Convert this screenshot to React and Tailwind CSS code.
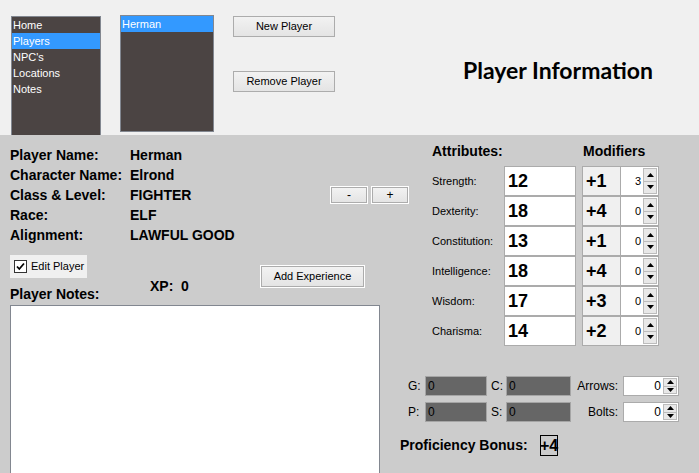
import React from "react";

const sans = { fontFamily: '"Liberation Sans", Arial, sans-serif' };

function Tri({ down }) {
  return (
    <svg width="7" height="4" viewBox="0 0 7 4">
      {down ? <path d="M0 0h7L3.5 4z" fill="#000" /> : <path d="M0 4h7L3.5 0z" fill="#000" />}
    </svg>
  );
}

function Spin({ value, className, numClass }) {
  return (
    <div className={`flex items-stretch bg-white border border-[#ababab] ${className}`}>
      <div className={`flex-1 flex items-center justify-end pr-[2px] text-black ${numClass}`}>{value}</div>
      <div className="w-[14px] mr-[1px] my-[1px] flex flex-col">
        <div className="flex-1 flex items-center justify-center bg-[#e8e8e8] border border-[#bcbcbc]"><Tri /></div>
        <div className="flex-1 flex items-center justify-center bg-[#e8e8e8] border border-[#bcbcbc] border-t-0"><Tri down /></div>
      </div>
    </div>
  );
}

const info = [
  ["Player Name:", "Herman"],
  ["Character Name:", "Elrond"],
  ["Class & Level:", "FIGHTER"],
  ["Race:", "ELF"],
  ["Alignment:", "LAWFUL GOOD"],
];

const attrs = [
  ["Strength:", "12", "+1", "3"],
  ["Dexterity:", "18", "+4", "0"],
  ["Constitution:", "13", "+1", "0"],
  ["Intelligence:", "18", "+4", "0"],
  ["Wisdom:", "17", "+3", "0"],
  ["Charisma:", "14", "+2", "0"],
];

export default function App() {
  return (
    <div className="w-[699px] h-[473px] overflow-hidden flex flex-col" style={sans}>
      {/* top */}
      <div className="h-[135px] bg-[#f0f0f0] flex items-start overflow-hidden shrink-0">
        <div className="ml-[11px] mt-[16px] w-[90px] h-[130px] bg-[#4b4443] border border-[#828790] pt-0 text-white text-[11px]">
          {["Home", "Players", "NPC's", "Locations", "Notes"].map((n) => (
            <div key={n} className={`h-[16px] leading-[16px] pl-[1px] ${n === "Players" ? "bg-[#3399ff]" : ""}`}>{n}</div>
          ))}
        </div>
        <div className="ml-[19px] mt-[15px] w-[94px] h-[117px] bg-[#4b4443] border border-[#828790] text-white text-[11px]">
          <div className="h-[16px] leading-[16px] pl-[1px] bg-[#3399ff]">Herman</div>
        </div>
        <div className="ml-[19px] mt-[16px] flex flex-col gap-[34px]">
          <button className="w-[102px] h-[21px] border border-[#acacac] bg-gradient-to-b from-[#f2f2f2] to-[#e4e4e4] text-[11px] text-black">New Player</button>
          <button className="w-[102px] h-[21px] border border-[#acacac] bg-gradient-to-b from-[#f2f2f2] to-[#e4e4e4] text-[11px] text-black">Remove Player</button>
        </div>
        <div className="ml-[128px] mt-[56px] text-[23px] leading-[28px] font-bold text-black whitespace-nowrap" style={{ fontFamily: "Lato, sans-serif" }}>
          Player Information
        </div>
      </div>

      {/* bottom */}
      <div className="flex-1 bg-[#cccccc] flex overflow-hidden">
        <div className="w-[420px] shrink-0 flex flex-col">
          <div className="flex mt-[10px]">
            <div className="w-[320px] pl-[10px]">
              {info.map(([l, v]) => (
                <div key={l} className="flex h-[20px] leading-[20px] text-[14px] font-bold text-black">
                  <div className="w-[120px] whitespace-nowrap">{l}</div>
                  <div>{v}</div>
                </div>
              ))}
            </div>
            <div className="ml-[11px] mt-[42px] flex gap-[5px] self-start">
              <button className="w-[36px] h-[16px] border border-[#acacac] shadow-[0_0_0_1px_#fff] bg-gradient-to-b from-[#f2f2f2] to-[#e4e4e4] text-[12px] leading-[14px] text-black">-</button>
              <button className="w-[36px] h-[16px] border border-[#acacac] shadow-[0_0_0_1px_#fff] bg-gradient-to-b from-[#f2f2f2] to-[#e4e4e4] text-[12px] leading-[14px] text-black">+</button>
            </div>
          </div>

          <div className="flex mt-[10px]">
            <div className="w-[140px] ml-[10px] flex flex-col">
              <div className="w-[77px] h-[23px] bg-[#f0f0f0] flex items-center pl-[4px] gap-[4px]">
                <div className="w-[13px] h-[13px] bg-white border border-[#333] flex items-center justify-center">
                  <svg width="9" height="9" viewBox="0 0 9 9"><path d="M1 4.5l2.3 2.5L8 1.5" stroke="#000" strokeWidth="1.8" fill="none" /></svg>
                </div>
                <span className="text-[11px] text-black">Edit Player</span>
              </div>
              <div className="mt-[6px] h-[20px] leading-[20px] text-[14px] font-bold text-black whitespace-nowrap">Player Notes:</div>
            </div>
            <div className="w-[111px] mt-[21px] h-[20px] leading-[20px] text-[14px] font-bold text-black whitespace-pre">XP:  0</div>
            <button className="mt-[11px] w-[103px] h-[21px] border border-[#acacac] shadow-[0_0_0_1px_#fff] bg-gradient-to-b from-[#f2f2f2] to-[#e4e4e4] text-[11px] text-black">Add Experience</button>
          </div>

          <div className="ml-[10px] mt-[1px] w-[370px] h-[180px] bg-white border border-[#828790] shrink-0" />
        </div>

        <div className="flex-1 flex flex-col pt-[6px]">
          <div className="flex h-[20px] leading-[20px] text-[14px] font-bold text-black">
            <div className="w-[163px] pl-[12px]">Attributes:</div>
            <div>Modifiers</div>
          </div>
          <div className="mt-[5px] flex flex-col">
            {attrs.map(([l, v, m, s]) => (
              <div key={l} className="flex items-center h-[30px]">
                <div className="w-[84px] pl-[12px] text-[11px] text-black">{l}</div>
                <div className="w-[72px] h-[30px] bg-white border border-[#ababab] pl-[3px] flex items-center text-[18px] font-bold text-black">{v}</div>
                <div className="ml-[6px] w-[39px] h-[30px] bg-[#f0f0f0] border border-[#ababab] pl-[3px] flex items-center text-[18px] font-bold text-black">{m}</div>
                <Spin value={s} className="w-[38px] h-[30px] border-l-0" numClass="text-[11px]" />
              </div>
            ))}
          </div>

          <div className="-ml-[20px] mt-[30px] flex flex-col gap-[6px]">
            {[["G:", "C:", "Arrows:"], ["P:", "S:", "Bolts:"]].map(([a, b, c]) => (
              <div key={a} className="flex items-center h-[20px] text-[12px] text-black">
                <div className="w-[25px] pl-[8px]">{a}</div>
                <div className="w-[62px] h-[20px] bg-[#666666] border border-[#a5a5a5] pl-[2px] leading-[18px] text-black">0</div>
                <div className="w-[19px] pl-[4px]">{b}</div>
                <div className="w-[65px] h-[20px] bg-[#666666] border border-[#a5a5a5] pl-[2px] leading-[18px] text-black">0</div>
                <div className="flex-1 text-right pr-[5px]">{c}</div>
                <Spin value="0" className="w-[56px] h-[20px] mr-[20px]" numClass="text-[12px]" />
              </div>
            ))}
            <div className="flex items-center mt-[7px]">
              <div className="w-[140px] text-[14px] font-bold text-black whitespace-nowrap">Proficiency Bonus:</div>
              <div className="w-[18px] h-[21px] border border-black flex items-center justify-center text-[16px] font-bold text-black overflow-visible">+4</div>
            </div>
          </div>
        </div>
      </div>
    </div>
  );
}
